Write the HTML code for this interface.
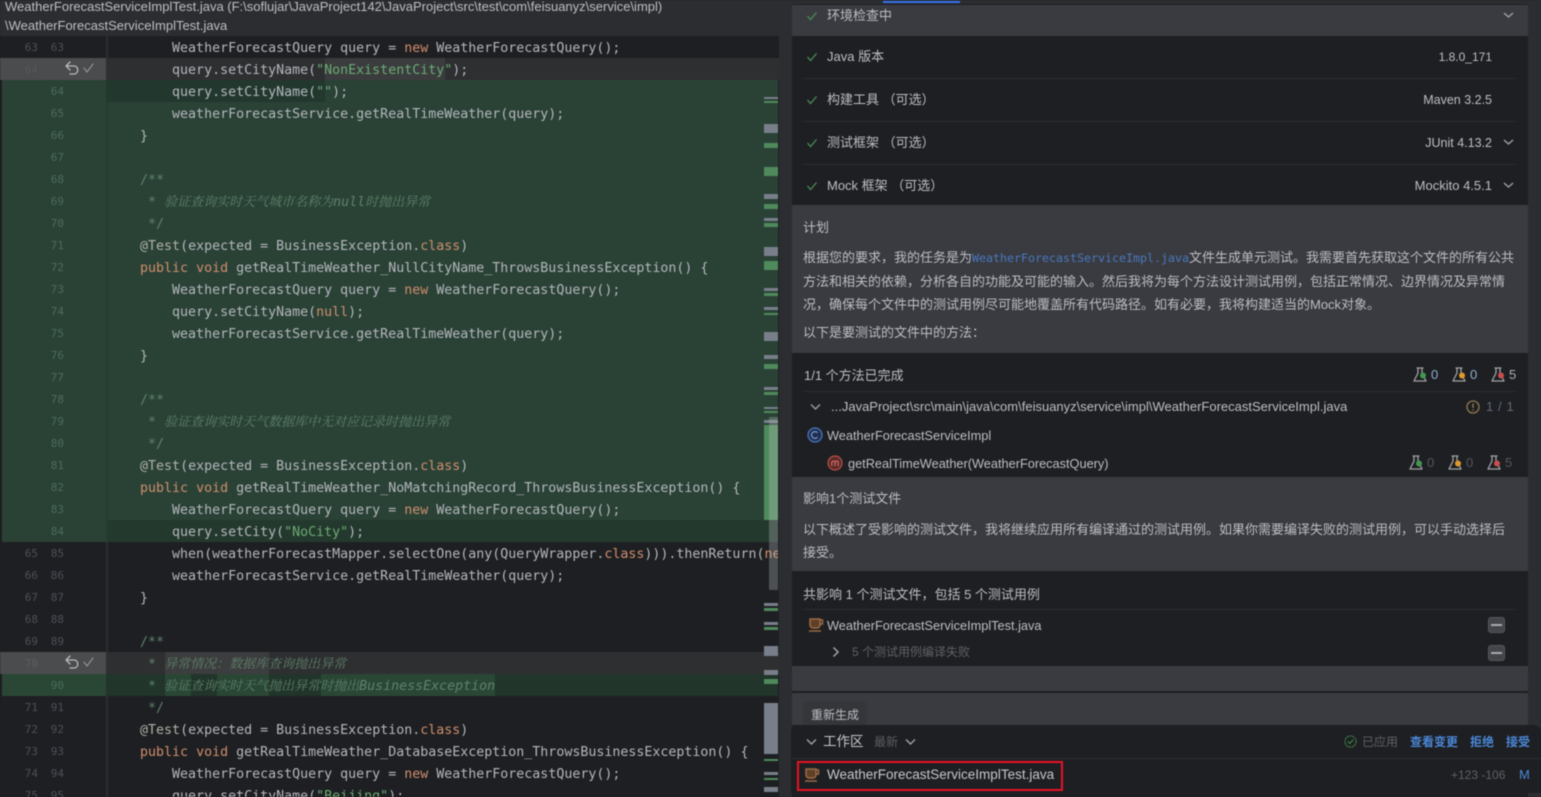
<!DOCTYPE html>
<html><head><meta charset="utf-8"><style>
html,body{margin:0;padding:0;background:#1e1f22;width:1541px;height:797px;overflow:hidden}
#r{position:absolute;left:0;top:0;width:1541px;height:797px;overflow:hidden;filter:blur(.45px);font-family:"Liberation Sans","Noto Sans CJK SC",sans-serif}
.b{position:absolute}
.t{position:absolute;white-space:nowrap;font-size:13px;line-height:20px;color:#bcbec4}
.l{font-size:12.75px}
pre{margin:0;position:absolute;font-family:"DejaVu Sans Mono","Liberation Mono",monospace}
#code{left:108px;top:38px;width:670px;height:759px;overflow:hidden;font-size:13.3px;line-height:22px;color:#b4b6bc}
#code .k{color:#cf8e6d}#code .s{color:#6aab73}#code .c{color:#5f826b}#code .a{color:#b0b0a6}
#code .z{font-family:"Noto Serif CJK SC",serif;font-style:italic;font-size:13px;color:#5f826b;line-height:0}
#code .i{font-style:italic;color:#5f826b}
.ln{top:37px;font-size:11px;line-height:22px;color:#4b5059;text-align:right}
.g{color:#4c6b59}
.m{position:absolute;left:764px;width:14px}
.mg{background:#787f8a}.mn{background:#4f8a5c}
.dim{color:#54575d}
.blue{color:#4a88d8}
</style></head><body><div id="r">

<!-- title -->
<div class="b" style="left:0;top:0;width:780px;height:36px;background:#2b2d30"></div>
<div class="t" style="left:5px;top:-3px">WeatherForecastServiceImplTest.java (F:\soflujar\JavaProject142\JavaProject\src\test\com\feisuanyz\service\impl)</div>
<div class="t" style="left:5px;top:16px">\WeatherForecastServiceImplTest.java</div>

<!-- editor backgrounds -->
<div class="b" style="left:0;top:36px;width:780px;height:761px;background:#1e1f22"></div>
<div class="b" style="left:0;top:58px;width:106px;height:22px;background:#4b4c4d"></div>
<div class="b" style="left:106px;top:58px;width:674px;height:22px;background:#2e2f31"></div>
<div class="b" style="left:325px;top:58px;width:120px;height:22px;background:#3b3c3e"></div>
<div class="b" style="left:2px;top:80px;width:776px;height:462px;background:#2a4236"></div>
<div class="b" style="left:106px;top:80px;width:219px;height:22px;background:#22382e"></div>
<div class="b" style="left:106px;top:102px;width:2px;height:440px;background:#253b31"></div>
<div class="b" style="left:108px;top:520px;width:670px;height:22px;background:#24392e"></div>
<div class="b" style="left:106px;top:36px;width:2px;height:22px;background:#2b2d30"></div>
<div class="b" style="left:106px;top:542px;width:2px;height:255px;background:#2b2d30"></div>
<div class="b" style="left:0;top:652px;width:106px;height:22px;background:#4b4c4d"></div>
<div class="b" style="left:106px;top:652px;width:674px;height:22px;background:#2e2f31"></div>
<div class="b" style="left:165px;top:652px;width:104px;height:22px;background:#3c3d3e"></div>
<div class="b" style="left:2px;top:674px;width:104px;height:22px;background:#2a4736"></div>
<div class="b" style="left:106px;top:674px;width:672px;height:22px;background:#21352a"></div>
<div class="b" style="left:165px;top:674px;width:26px;height:22px;background:#2a4736"></div>
<div class="b" style="left:217px;top:674px;width:52px;height:22px;background:#2a4736"></div>
<div class="b" style="left:321px;top:674px;width:174px;height:22px;background:#2a4736"></div>

<!-- line numbers -->
<pre class="ln" style="left:10px;width:28px">63
<span style="color:#55575a">64</span>





















65
66
67
68
69
<span style="color:#5c5e60">70</span>

71
72
73
74
75</pre>
<pre class="ln" style="left:36px;width:28px">63

<span class="g">64
65
66
67
68
69
70
71
72
73
74
75
76
77
78
79
80
81
82
83
84</span>
85
86
87
88
89

<span class="g">90</span>
91
92
93
94
95</pre>

<!-- gutter icons -->
<svg class="b" style="left:64px;top:60px" width="32" height="18" fill="none" stroke-linecap="round" stroke-linejoin="round"><path d="M6 2 L2 6 L6 10 M2 6 H10 C15 6 15 14 10 14 H6" stroke="#b8b9ba" stroke-width="1.3"/><path d="M20 8 L23 12 L29 4" stroke="#8e9092" stroke-width="1.2"/></svg>
<svg class="b" style="left:64px;top:654px" width="32" height="18" fill="none" stroke-linecap="round" stroke-linejoin="round"><path d="M6 2 L2 6 L6 10 M2 6 H10 C15 6 15 14 10 14 H6" stroke="#b8b9ba" stroke-width="1.3"/><path d="M20 8 L23 12 L29 4" stroke="#8e9092" stroke-width="1.2"/></svg>

<!-- code -->
<pre id="code">        WeatherForecastQuery query = <span class="k">new</span> WeatherForecastQuery();
        query.setCityName(<span class="s">"NonExistentCity"</span>);
        query.setCityName(<span class="s">""</span>);
        weatherForecastService.getRealTimeWeather(query);
    }

    <span class="c">/**</span>
     <span class="c">*</span> <span class="z">验证查询实时天气城市名称为</span><span class="i">null</span><span class="z">时抛出异常</span>
     <span class="c">*/</span>
    <span class="a">@Test</span>(expected = BusinessException.<span class="k">class</span>)
    <span class="k">public void</span> getRealTimeWeather_NullCityName_ThrowsBusinessException() {
        WeatherForecastQuery query = <span class="k">new</span> WeatherForecastQuery();
        query.setCityName(<span class="k">null</span>);
        weatherForecastService.getRealTimeWeather(query);
    }

    <span class="c">/**</span>
     <span class="c">*</span> <span class="z">验证查询实时天气数据库中无对应记录时抛出异常</span>
     <span class="c">*/</span>
    <span class="a">@Test</span>(expected = BusinessException.<span class="k">class</span>)
    <span class="k">public void</span> getRealTimeWeather_NoMatchingRecord_ThrowsBusinessException() {
        WeatherForecastQuery query = <span class="k">new</span> WeatherForecastQuery();
        query.setCity(<span class="s">"NoCity"</span>);
        when(weatherForecastMapper.selectOne(any(QueryWrapper.<span class="k">class</span>))).thenReturn(<span class="k">new</span>
        weatherForecastService.getRealTimeWeather(query);
    }

    <span class="c">/**</span>
     <span class="c">*</span> <span class="z">异常情况：数据库查询抛出异常</span>
     <span class="c">*</span> <span class="z">验证查询实时天气抛出异常时抛出</span><span class="i">BusinessException</span>
     <span class="c">*/</span>
    <span class="a">@Test</span>(expected = BusinessException.<span class="k">class</span>)
    <span class="k">public void</span> getRealTimeWeather_DatabaseException_ThrowsBusinessException() {
        WeatherForecastQuery query = <span class="k">new</span> WeatherForecastQuery();
        query.setCityName(<span class="s">"Beijing"</span>);</pre>

<!-- markers -->
<div class="m mg" style="top:97px;height:2px"></div><div class="m mn" style="top:101px;height:2px"></div>
<div class="m mg" style="top:124px;height:9px"></div><div class="m mn" style="top:143px;height:5px"></div>
<div class="m mn" style="top:167px;height:9px"></div><div class="m mg" style="top:194px;height:5px"></div>
<div class="m mn" style="top:204px;height:5px"></div><div class="m mg" style="top:218px;height:3px"></div>
<div class="m mn" style="top:223px;height:4px"></div><div class="m mg" style="top:247px;height:9px"></div>
<div class="m mn" style="top:261px;height:9px"></div><div class="m mg" style="top:288px;height:3px"></div>
<div class="m mn" style="top:293px;height:3px"></div><div class="m mg" style="top:307px;height:3px"></div>
<div class="m mn" style="top:313px;height:2px"></div><div class="m mg" style="top:332px;height:9px"></div>
<div class="m mg" style="top:355px;height:4px"></div><div class="m mn" style="top:364px;height:5px"></div>
<div class="m mg" style="top:387px;height:3px"></div><div class="m mn" style="top:392px;height:3px"></div>
<div class="m mg" style="top:407px;height:2px"></div><div class="m mn" style="top:411px;height:2px"></div>
<div class="m mg" style="top:420px;height:3px"></div><div class="m mn" style="top:425px;height:95px"></div>
<div class="m mg" style="top:603px;height:3px"></div><div class="m mn" style="top:608px;height:3px"></div>
<div class="m mg" style="top:622px;height:3px"></div><div class="m mn" style="top:627px;height:3px"></div>
<div class="m mg" style="top:646px;height:10px"></div><div class="m mg" style="top:670px;height:5px"></div>
<div class="m mn" style="top:679px;height:5px"></div><div class="m mg" style="top:703px;height:51px"></div>
<div class="m mn" style="top:759px;height:2px"></div><div class="m mg" style="top:772px;height:3px"></div>
<div class="m mn" style="top:778px;height:2px"></div><div class="m mg" style="top:787px;height:5px"></div>
<div class="b" style="left:769px;top:417px;width:9px;height:173px;background:rgba(190,195,195,.3);border-radius:1px"></div>

<!-- right side base -->
<div class="b" style="left:779px;top:0;width:762px;height:797px;background:#2b2d30"></div>
<div class="b" style="left:792px;top:4px;width:736px;height:793px;background:#1e1f22"></div>
<div class="b" style="left:883px;top:1px;width:77px;height:2px;background:#3574f0"></div>
<div class="b" style="left:792px;top:5px;width:736px;height:31px;background:#393b40"></div>
<div class="b" style="left:803px;top:78px;width:713px;height:1px;background:#2b2d30"></div>
<div class="b" style="left:803px;top:121px;width:713px;height:1px;background:#2b2d30"></div>
<div class="b" style="left:803px;top:164px;width:713px;height:1px;background:#2b2d30"></div>
<div class="b" style="left:792px;top:205px;width:736px;height:148px;background:#393b40"></div>
<div class="b" style="left:803px;top:391px;width:713px;height:1px;background:#2b2d30"></div>
<div class="b" style="left:792px;top:477px;width:736px;height:94px;background:#393b40"></div>
<div class="b" style="left:803px;top:609px;width:713px;height:1px;background:#2b2d30"></div>
<div class="b" style="left:792px;top:666px;width:736px;height:25px;background:#393b40"></div>
<div class="b" style="left:792px;top:693px;width:736px;height:32px;background:#393b40"></div>
<div class="b" style="left:803px;top:701px;width:64px;height:24px;background:#34363a;border-radius:5px 5px 0 0"></div>

<!-- checks -->
<svg class="b" style="left:805px;top:9px" width="14" height="190" fill="none" stroke="#4a8c58" stroke-width="1.3"><path d="M2.5 7 L5.5 10.5 L11.5 3.5"/><path d="M2.5 48 L5.5 51.5 L11.5 44.5"/><path d="M2.5 91 L5.5 94.5 L11.5 87.5"/><path d="M2.5 134 L5.5 137.5 L11.5 130.5"/><path d="M2.5 177 L5.5 180.5 L11.5 173.5"/></svg>
<div class="t" style="left:827px;top:6px">环境检查中</div>
<div class="t" style="left:827px;top:47px">Java 版本</div>
<div class="t" style="left:827px;top:90px">构建工具 （可选）</div>
<div class="t" style="left:827px;top:133px">测试框架 （可选）</div>
<div class="t" style="left:827px;top:176px">Mock 框架 （可选）</div>
<div class="t" style="right:49px;top:47px;font-size:12px">1.8.0_171</div>
<div class="t" style="right:49px;top:90px;font-size:12.5px">Maven 3.2.5</div>
<div class="t" style="right:49px;top:133px;font-size:12.5px">JUnit 4.13.2</div>
<div class="t" style="right:49px;top:176px;font-size:13px">Mockito 4.5.1</div>
<svg class="b" style="left:1503px;top:10px" width="12" height="180" fill="none" stroke="#a0a2a6" stroke-width="1.4"><path d="M1 3 L5.5 7 L10 3"/><path d="M1 130 L5.5 134 L10 130"/><path d="M1 173 L5.5 177 L10 173"/></svg>

<!-- plan -->
<div class="t" style="left:803px;top:218px">计划</div>
<div class="t" style="left:803px;top:248px">根据您的要求，我的任务是为<span style="font-family:'DejaVu Sans Mono',monospace;font-size:11.63px;color:#4a78c0">WeatherForecastServiceImpl.java</span>文件生成单元测试。我需要首先获取这个文件的所有公共</div>
<div class="t" style="left:803px;top:272px">方法和相关的依赖，分析各自的功能及可能的输入。然后我将为每个方法设计测试用例，包括正常情况、边界情况及异常情</div>
<div class="t" style="left:803px;top:295px">况，确保每个文件中的测试用例尽可能地覆盖所有代码路径。如有必要，我将构建适当的Mock对象。</div>
<div class="t" style="left:803px;top:323px">以下是要测试的文件中的方法：</div>

<!-- methods -->
<div class="t" style="left:804px;top:366px">1/1 个方法已完成</div>
<svg class="b" style="left:1413px;top:367px" width="95" height="16" fill="none">
 <defs><path id="fl" d="M3.5 1 H10.5 M5 1.5 V6 L1 14 H13 L9 6 V1.5" stroke="#a0a2a5" stroke-width="1.3" stroke-linejoin="round"/></defs>
 <use href="#fl"/><circle cx="10" cy="8.5" r="3" fill="#3f9a4f"/>
 <use href="#fl" x="39"/><circle cx="49" cy="8.5" r="3" fill="#e0992a"/>
 <use href="#fl" x="78"/><circle cx="88" cy="8.5" r="3" fill="#c94f4f"/>
</svg>
<div class="t" style="left:1431px;top:365px;color:#8fb0d0">0</div>
<div class="t" style="left:1470px;top:365px;color:#8fb0d0">0</div>
<div class="t" style="left:1509px;top:365px;color:#a8b0b8">5</div>
<svg class="b" style="left:810px;top:403px" width="12" height="8" fill="none" stroke="#9a9ca0" stroke-width="1.4"><path d="M1 1.5 L5.5 6 L10 1.5"/></svg>
<div class="t" style="left:831px;top:397px">...JavaProject\src\main\java\com\feisuanyz\service\impl\WeatherForecastServiceImpl.java</div>
<svg class="b" style="left:1466px;top:400px" width="14" height="14" fill="none"><circle cx="7" cy="7" r="6" stroke="#8f7a4f" stroke-width="1.3"/><path d="M7 3.5 V8 M7 9.5 V10.8" stroke="#8f7a4f" stroke-width="1.4"/></svg>
<div class="t" style="left:1486px;top:397px;color:#5e6b78;letter-spacing:.6px">1 / 1</div>

<svg class="b" style="left:807px;top:427px" width="16" height="16" fill="none"><circle cx="8" cy="8" r="7" fill="#232f4c" stroke="#4a78c8" stroke-width="1.2"/><path d="M10.5 5.8 A3.4 3.4 0 1 0 10.5 10.2" stroke="#6f98dc" stroke-width="1.2"/></svg>
<div class="t l" style="left:827px;top:426px">WeatherForecastServiceImpl</div>
<svg class="b" style="left:827px;top:455px" width="16" height="16" fill="none"><circle cx="8" cy="8" r="7" fill="#5c2a29" stroke="#b84f48" stroke-width="1.2"/><path d="M4.8 11 V6.5 M4.8 7.5 C5.5 5.5 8 5.5 8 7.5 V11 M8 7.5 C8.7 5.5 11.2 5.5 11.2 7.5 V11" stroke="#d8726a" stroke-width="1.1"/></svg>
<div class="t l" style="left:848px;top:454px">getRealTimeWeather(WeatherForecastQuery)</div>
<svg class="b" style="left:1409px;top:455px" width="95" height="16" fill="none">
 <use href="#fl"/><circle cx="10" cy="8.5" r="3" fill="#3f9a4f"/>
 <use href="#fl" x="39"/><circle cx="49" cy="8.5" r="3" fill="#e0992a"/>
 <use href="#fl" x="78"/><circle cx="88" cy="8.5" r="3" fill="#c94f4f"/>
</svg>
<div class="t dim" style="left:1427px;top:453px">0</div>
<div class="t dim" style="left:1466px;top:453px">0</div>
<div class="t dim" style="left:1505px;top:453px">5</div>

<!-- impact -->
<div class="t" style="left:803px;top:489px">影响1个测试文件</div>
<div class="t" style="left:803px;top:520px">以下概述了受影响的测试文件，我将继续应用所有编译通过的测试用例。如果你需要编译失败的测试用例，可以手动选择后</div>
<div class="t" style="left:803px;top:543px">接受。</div>
<div class="t" style="left:803px;top:585px">共影响 1 个测试文件，包括 5 个测试用例</div>
<svg class="b" style="left:808px;top:617px" width="16" height="16" fill="none" stroke="#9c6a45" stroke-width="1.5"><path d="M2 2 H12 V8 C12 10 10.5 11 9 11 H5 C3.5 11 2 10 2 8 Z" fill="#5e4029"/><path d="M12 3 H14.5 V7 H12"/><path d="M1 14 H13"/></svg>
<div class="t l" style="left:827px;top:616px">WeatherForecastServiceImplTest.java</div>
<svg class="b" style="left:832px;top:646px" width="8" height="12" fill="none" stroke="#a0a2a6" stroke-width="1.5"><path d="M1.5 1.5 L6 6 L1.5 10.5"/></svg>
<div class="t dim" style="left:852px;top:642px;font-size:12px;color:#5e6167">5 个测试用例编译失败</div>
<div class="b" style="left:1488px;top:617px;width:15px;height:14px;background:#43454a;border:1px solid #55575c;border-radius:3px"></div>
<div class="b" style="left:1491px;top:624px;width:11px;height:2px;background:#a8aaae"></div>
<div class="b" style="left:1488px;top:645px;width:15px;height:14px;background:#43454a;border:1px solid #55575c;border-radius:3px"></div>
<div class="b" style="left:1491px;top:652px;width:11px;height:2px;background:#a8aaae"></div>
<div class="t" style="left:811px;top:705px;font-size:12px">重新生成</div>

<!-- bottom panel -->
<div class="b" style="left:791px;top:725px;width:750px;height:68px;background:#1e1f22;border-radius:7px 7px 0 0"></div>
<div class="b" style="left:792px;top:758px;width:749px;height:1px;background:#2b2d30"></div>
<svg class="b" style="left:806px;top:738px" width="12" height="8" fill="none" stroke="#a0a2a6" stroke-width="1.4"><path d="M1 1.5 L5.5 6 L10 1.5"/></svg>
<div class="t" style="left:823px;top:732px;font-size:13.5px;color:#c4c6cc">工作区</div>
<div class="t" style="left:874px;top:732px;font-size:12px;color:#5a5d63">最新</div>
<svg class="b" style="left:905px;top:738px" width="12" height="8" fill="none" stroke="#a0a2a6" stroke-width="1.4"><path d="M1 1.5 L5.5 6 L10 1.5"/></svg>
<svg class="b" style="left:1344px;top:735px" width="13" height="13" fill="none" stroke="#3f8a4c" stroke-width="1.1"><circle cx="6.5" cy="6.5" r="5.6" stroke-dasharray="2 .8"/><path d="M3.8 6.5 L5.8 8.5 L9.2 4.6"/></svg>
<div class="t" style="left:1362px;top:732px;font-size:12px;color:#5e6167">已应用</div>
<div class="t blue" style="left:1410px;top:732px;font-size:12px;font-weight:bold">查看变更</div>
<div class="t blue" style="left:1470px;top:732px;font-size:12px;font-weight:bold">拒绝</div>
<div class="t blue" style="left:1506px;top:732px;font-size:12px;font-weight:bold">接受</div>
<svg class="b" style="left:804px;top:767px" width="16" height="16" fill="none" stroke="#9c6a45" stroke-width="1.5"><path d="M2 2 H12 V8 C12 10 10.5 11 9 11 H5 C3.5 11 2 10 2 8 Z" fill="#5e4029"/><path d="M12 3 H14.5 V7 H12"/><path d="M1 14 H13"/></svg>
<div class="t" style="left:827px;top:765px;font-size:13.5px;color:#c4c6cc">WeatherForecastServiceImplTest.java</div>
<div class="b" style="left:797px;top:761px;width:262px;height:26px;border:2px solid #e81123"></div>
<div class="t" style="left:1451px;top:765px;font-size:12px;color:#5e6167">+123 -106</div>
<div class="t blue" style="left:1519px;top:765px;font-size:13px">M</div>
</div></body></html>
